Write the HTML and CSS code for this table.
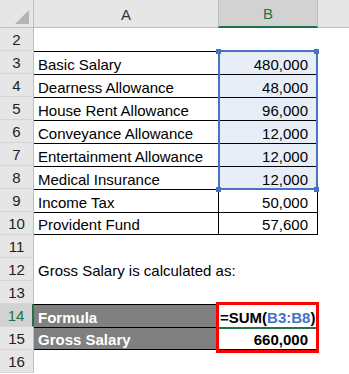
FILE: index.html
```html
<!DOCTYPE html>
<html>
<head>
<meta charset="utf-8">
<link rel="stylesheet" href="styles.css">
</head>
<body>
<div class="sheet">
  <div class="corner"><span class="tri"></span></div>
  <div class="colhead">A</div>
  <div class="colhead sel">B</div>
  <div class="colhead rest"></div>

  <div class="rh">2</div><div class="c"></div><div class="c"></div><div class="c"></div>

  <div class="rh">3</div><div class="c t a">Basic Salary</div><div class="c t b s">480,000</div><div class="c"></div>
  <div class="rh">4</div><div class="c t a">Dearness Allowance</div><div class="c t b s">48,000</div><div class="c"></div>
  <div class="rh">5</div><div class="c t a">House Rent Allowance</div><div class="c t b s">96,000</div><div class="c"></div>
  <div class="rh">6</div><div class="c t a">Conveyance Allowance</div><div class="c t b s">12,000</div><div class="c"></div>
  <div class="rh">7</div><div class="c t a">Entertainment Allowance</div><div class="c t b s">12,000</div><div class="c"></div>
  <div class="rh">8</div><div class="c t a">Medical Insurance</div><div class="c t b s">12,000</div><div class="c"></div>
  <div class="rh">9</div><div class="c t a">Income Tax</div><div class="c t b">50,000</div><div class="c"></div>
  <div class="rh">10</div><div class="c t a last">Provident Fund</div><div class="c t b last">57,600</div><div class="c"></div>

  <div class="rh">11</div><div class="c"></div><div class="c"></div><div class="c"></div>
  <div class="rh">12</div><div class="c a over">Gross Salary is calculated as:</div><div class="c"></div><div class="c"></div>
  <div class="rh">13</div><div class="c"></div><div class="c"></div><div class="c"></div>

  <div class="rh act">14</div><div class="c t a dark">Formula</div><div class="c t f"><span class="k">=SUM(</span><span class="ref">B3:B8</span><span class="k">)</span><span class="caret"></span></div><div class="c"></div>
  <div class="rh">15</div><div class="c t a dark last">Gross Salary</div><div class="c t b bold last">660,000</div><div class="c"></div>

  <div class="rh">16</div><div class="c"></div><div class="c"></div><div class="c"></div>

  <div class="selection"></div>
  <div class="handle h1"></div>
  <div class="handle h2"></div>
  <div class="handle h3"></div>
  <div class="handle h4"></div>
  <div class="editline"></div>
  <div class="redbox"></div>
</div>
</body>
</html>
```

FILE: styles.css
```css
html, body {
  margin: 0;
  padding: 0;
  background: #ffffff;
}

body {
  font-family: "Liberation Sans", Arial, sans-serif;
  font-size: 15px;
  color: #000;
  overflow: hidden;
}

.sheet {
  position: relative;
  display: grid;
  grid-template-columns: 34px 184px 100px 1fr;
  grid-template-rows: 28px repeat(15, 23px);
  width: 349px;
}

.corner {
  position: relative;
  background: #e6e6e6;
  border-right: 1px solid #bdbdbd;
  border-bottom: 1px solid #bdbdbd;
  box-sizing: border-box;
}

.tri {
  position: absolute;
  right: 4px;
  bottom: 3px;
  width: 0;
  height: 0;
  border-left: 14px solid transparent;
  border-bottom: 14px solid #b4b4b4;
}

.colhead {
  background: #e6e6e6;
  border-bottom: 1px solid #bdbdbd;
  box-sizing: border-box;
  display: flex;
  align-items: center;
  justify-content: center;
  color: #333;
  font-size: 15px;
  padding-top: 1px;
}

.colhead.sel {
  background: #d2d2d2;
  color: #217346;
  border-left: 1px solid #bdbdbd;
  border-right: 1px solid #bdbdbd;
  border-bottom: 2px solid #217346;
}

.rh {
  background: #e6e6e6;
  border-right: 1px solid #bdbdbd;
  border-bottom: 1px solid #d6d6d6;
  box-sizing: border-box;
  display: flex;
  align-items: center;
  justify-content: center;
  color: #222;
  font-size: 15px;
  padding-top: 1px;
}

.rh.act {
  background: #d2d2d2;
  color: #217346;
  border-right: 2px solid #217346;
}

.c {
  box-sizing: border-box;
  display: flex;
  align-items: center;
  white-space: nowrap;
  padding-top: 2px;
}

.t {
  border-top: 1px solid #000;
}

.last {
  border-bottom: 1px solid #000;
}

.a {
  padding-left: 4px;
}

.over {
  overflow: visible;
  position: relative;
  z-index: 1;
}

.b {
  justify-content: flex-end;
  padding-right: 9px;
  border-left: 1px solid #000;
  border-right: 1px solid #000;
}

.s {
  background: #e8eef8;
}

.dark {
  background: #808080;
  color: #fff;
  font-weight: bold;
}

.bold {
  font-weight: bold;
}

.f {
  border-left: 1px solid #000;
  border-right: 1px solid #000;
  padding-left: 1px;
  font-weight: bold;
  overflow: visible;
}

.ref {
  color: #4472c4;
}

.caret {
  display: inline-block;
  width: 1px;
  height: 20px;
  background: #000;
  margin-left: 1px;
  margin-top: -2px;
}

.selection {
  position: absolute;
  left: 218px;
  top: 50px;
  width: 100px;
  height: 140px;
  box-sizing: border-box;
  border: 2px solid #4472c4;
  pointer-events: none;
}

.handle {
  position: absolute;
  width: 5px;
  height: 5px;
  background: #4472c4;
}

.h1 { left: 216px; top: 49px; }
.h2 { left: 314px; top: 49px; }
.h3 { left: 216px; top: 187px; }
.h4 { left: 314px; top: 187px; }

.editline {
  position: absolute;
  left: 219px;
  top: 327px;
  width: 98px;
  height: 2px;
  background: #217346;
}

.redbox {
  position: absolute;
  left: 216px;
  top: 302px;
  width: 103px;
  height: 51px;
  box-sizing: border-box;
  border: 3px solid #ff0000;
  pointer-events: none;
}
```
